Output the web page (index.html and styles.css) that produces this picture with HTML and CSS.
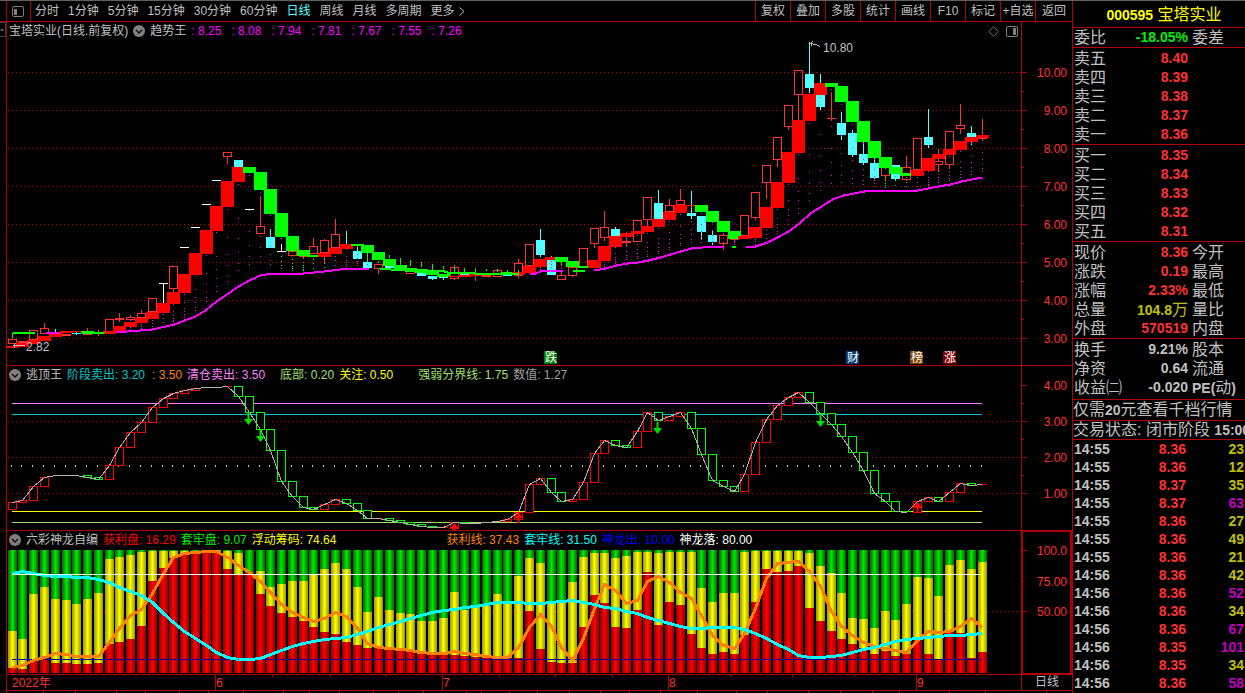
FILE: index.html
```html
<!DOCTYPE html>
<html lang="zh-CN">
<head>
<meta charset="utf-8">
<title>宝塔实业 000595 日线</title>
<link rel="stylesheet" href="styles.css">
</head>
<body>
<div class="app">
  <main class="workspace">
    <nav class="toolbar">
      <button class="layout-toggle" aria-label="切换布局">
        <svg width="12" height="11" viewBox="0 0 12 11"><rect x=".5" y=".5" width="11" height="10" rx="1.5" fill="none" stroke="#808080"/><rect x="2" y="3" width="3" height="6" fill="#808080"/></svg>
      </button>
      <div class="periods">
        <button>分时</button><button>1分钟</button><button>5分钟</button><button>15分钟</button><button>30分钟</button><button>60分钟</button><button class="active">日线</button><button>周线</button><button>月线</button><button>多周期</button>
        <button>更多<svg class="chevron" width="6" height="9" viewBox="0 0 6 9"><path d="M.5 .5L5 4.500L.5 8.500" fill="none" stroke="#c0c0c0"/></svg></button>
      </div>
      <div class="actions">
        <button>复权</button><button>叠加</button><button>多股</button><button>统计</button><button>画线</button><button>F10</button><button>标记</button><button>+自选</button><button>返回</button>
      </div>
    </nav>

    <div class="body">
      <div class="rail">
        <svg width="6" height="16" viewBox="0 0 6 16"><path d="M0 .5H5.500V14.500H0" fill="none" stroke="#404040"/><path d="M0 9L2 6L4 9z" fill="#606060"/></svg>
      </div>
      <div class="panels">
        <section class="panel panel-price">
          <div class="plot">
            <div class="legend">
              <span>宝塔实业(日线.前复权)</span>
              <svg class="drop" width="12" height="12" viewBox="0 0 12 12"><circle cx="6" cy="6" r="6" fill="#808080"/><path d="M3 5L6 8L9 5" fill="none" stroke="#101010" stroke-width="1.500"/></svg>
              <span>趋势王</span>
              <div class="trend"><span>: 8.25</span><span>: 8.08</span><span>: 7.94</span><span>: 7.81</span><span>: 7.67</span><span>: 7.55</span><span>: 7.26</span></div>
              <div class="tools">
                <svg width="11" height="11" viewBox="0 0 11 11"><path d="M5.500 .7L10.300 5.500L5.500 10.300L.7 5.500z" fill="none" stroke="#707070"/></svg>
                <svg width="12" height="11" viewBox="0 0 12 11"><rect x=".5" y=".5" width="11" height="10" rx="1.500" fill="none" stroke="#808080"/><rect x="7" y="2" width="3" height="7" fill="#808080"/></svg>
              </div>
            </div>
            <svg class="chart" id="price"></svg>
          </div>
          <svg class="axis" id="price-axis"></svg>
        </section>

        <section class="panel panel-escape">
          <div class="plot">
            <div class="legend">
              <svg class="drop" width="12" height="12" viewBox="0 0 12 12"><circle cx="6" cy="6" r="6" fill="#808080"/><path d="M3 5L6 8L9 5" fill="none" stroke="#101010" stroke-width="1.500"/></svg>
              <span>逃顶王</span>
              <span class="teal">阶段卖出: 3.20</span>
              <span class="orange offset-s">: 3.50</span>
              <span class="pink">清仓卖出: 3.50</span>
              <span class="lime offset-m">底部: 0.20</span>
              <span class="yellow">关注: 0.50</span>
              <span class="lime offset-l">强弱分界线: 1.75</span>
              <span class="gray">数值: 1.27</span>
            </div>
            <svg class="chart" id="escape"></svg>
          </div>
          <svg class="axis" id="escape-axis"></svg>
        </section>

        <section class="panel panel-dragon">
          <div class="plot">
            <div class="legend">
              <svg class="drop" width="12" height="12" viewBox="0 0 12 12"><circle cx="6" cy="6" r="6" fill="#808080"/><path d="M3 5L6 8L9 5" fill="none" stroke="#101010" stroke-width="1.500"/></svg>
              <span>六彩神龙自编</span>
              <span class="red">获利盘: 16.29</span>
              <span class="green">套牢盘: 9.07</span>
              <span class="yellow">浮动筹码: 74.64</span>
              <span class="orange offset-xl">获利线: 37.43</span>
              <span class="cyan">套牢线: 31.50</span>
              <span class="blue">神龙出: 10.00</span>
              <span class="white">神龙落: 80.00</span>
            </div>
            <svg class="chart" id="dragon"></svg>
          </div>
          <svg class="axis boxed" id="dragon-axis"></svg>
        </section>

        <div class="timeline">
          <svg class="dates" id="dates"></svg>
          <span class="period">日线</span>
        </div>
        <svg class="footer" id="footer"></svg>
      </div>
    </div>
  </main>

  <aside class="quote">
    <h1><b>000595</b> 宝塔实业</h1>
    <table class="block single"><tbody>
      <tr><th>委比</th><td class="green">-18.05%</td><th>委差</th></tr>
    </tbody></table>
    <table class="block"><tbody>
      <tr><th>卖五</th><td>8.40</td><th></th></tr>
      <tr><th>卖四</th><td>8.39</td><th></th></tr>
      <tr><th>卖三</th><td>8.38</td><th></th></tr>
      <tr><th>卖二</th><td>8.37</td><th></th></tr>
      <tr><th>卖一</th><td>8.36</td><th></th></tr>
    </tbody></table>
    <table class="block"><tbody>
      <tr><th>买一</th><td>8.35</td><th></th></tr>
      <tr><th>买二</th><td>8.34</td><th></th></tr>
      <tr><th>买三</th><td>8.33</td><th></th></tr>
      <tr><th>买四</th><td>8.32</td><th></th></tr>
      <tr><th>买五</th><td>8.31</td><th></th></tr>
    </tbody></table>
    <table class="block"><tbody>
      <tr><th>现价</th><td>8.36</td><th>今开</th></tr>
      <tr><th>涨跌</th><td>0.19</td><th>最高</th></tr>
      <tr><th>涨幅</th><td>2.33%</td><th>最低</th></tr>
      <tr><th>总量</th><td class="olive">104.8<span class="unit">万</span></td><th>量比</th></tr>
      <tr><th>外盘</th><td>570519</td><th>内盘</th></tr>
    </tbody></table>
    <table class="block tall"><tbody>
      <tr><th>换手</th><td class="plain">9.21%</td><th>股本</th></tr>
      <tr><th>净资</th><td class="plain">0.64</td><th>流通</th></tr>
      <tr><th>收益㈡</th><td class="plain">-0.020</td><th><b>PE(</b>动<b>)</b></th></tr>
    </tbody></table>
    <p class="promo">仅需<b>20</b>元查看千档行情</p>
    <p class="status">交易状态: 闭市阶段 <b>15:00</b></p>
    <table class="ticks"><tbody>
      <tr><th>14:55</th><td>8.36</td><td class="olive">23</td></tr>
      <tr><th>14:55</th><td>8.36</td><td class="olive">12</td></tr>
      <tr><th>14:55</th><td>8.37</td><td class="olive">35</td></tr>
      <tr><th>14:55</th><td>8.37</td><td class="purple">63</td></tr>
      <tr><th>14:55</th><td>8.36</td><td class="olive">27</td></tr>
      <tr><th>14:55</th><td>8.36</td><td class="olive">49</td></tr>
      <tr><th>14:55</th><td>8.36</td><td class="olive">21</td></tr>
      <tr><th>14:56</th><td>8.36</td><td class="olive">42</td></tr>
      <tr><th>14:56</th><td>8.36</td><td class="purple">52</td></tr>
      <tr><th>14:56</th><td>8.36</td><td class="olive">34</td></tr>
      <tr><th>14:56</th><td>8.36</td><td class="purple">67</td></tr>
      <tr><th>14:56</th><td>8.35</td><td class="purple">101</td></tr>
      <tr><th>14:56</th><td>8.35</td><td class="olive">34</td></tr>
      <tr><th>14:56</th><td>8.36</td><td class="purple">58</td></tr>
    </tbody></table>
  </aside>
</div>
<script src="charts.js"></script>
</body>
</html>
```

FILE: styles.css
```css
* { box-sizing: border-box; }
body {
  margin: 0;
  background: #000;
  color: #c0c0c0;
  font: 12px/16px "Liberation Sans", "Noto Sans CJK SC", sans-serif;
}
button {
  padding: 0;
  border: 0;
  background: none;
  color: inherit;
  font: inherit;
  white-space: nowrap;
  cursor: pointer;
}
svg { display: block; flex: none; }

.app {
  display: grid;
  grid-template-columns: minmax(0, 1fr) 173px;
  height: 100vh;
  min-height: 600px;
  border-top: 1px solid #606060;
  overflow: hidden;
}
.workspace { display: flex; flex-direction: column; min-width: 0; min-height: 0; }

.toolbar {
  display: flex;
  flex: none;
  height: 21px;
  border-bottom: 1px solid #b00000;
}
.layout-toggle {
  width: 25px;
  margin-left: 6px;
  padding-left: 5px;
  border-left: 1px solid #b00000;
  border-right: 1px solid #b00000;
}
.periods { display: flex; gap: 9px; padding-left: 4px; }
.periods button { display: flex; align-items: center; gap: 4px; }
.periods .active { color: #54ffff; }
.actions { display: flex; margin-left: auto; }
.actions button { width: 35px; border-left: 1px solid #b00000; }
.actions button:last-child { width: 37px; }

.body { display: flex; flex: 1; min-height: 0; }
.rail { flex: none; width: 7px; border-right: 1px solid #b00000; }
.panels { display: flex; flex: 1; flex-direction: column; min-width: 0; }
.panel {
  display: grid;
  grid-template-columns: minmax(0, 1fr) 51px;
  grid-template-rows: minmax(0, 1fr);
  min-height: 0;
  border-bottom: 1px solid #b00000;
}
.panel-price { flex: 343 1 0; }
.panel-escape { flex: 164 1 0; }
.panel-dragon { flex: 143 1 0; }
.plot { display: flex; flex-direction: column; min-width: 0; min-height: 0; }
.legend {
  display: flex;
  flex: none;
  align-items: center;
  gap: 5px;
  height: 18px;
  padding-left: 2px;
  white-space: nowrap;
}
.trend { display: flex; gap: 10px; color: #f0f; }
.tools { display: flex; gap: 7px; margin-left: auto; padding-right: 3px; }
.offset-s { margin-left: 2px; }
.offset-m { margin-left: 10px; }
.offset-l { margin-left: 20px; }
.offset-xl { margin-left: 105px; }
.chart { flex: 1 1 0; width: 100%; min-height: 0; }
.axis { width: 100%; height: 100%; border-left: 1px solid #b00000; }
.boxed { border: 2px solid #b00000; border-top-width: 1px; border-bottom-width: 1px; }

.timeline {
  display: grid;
  grid-template-columns: minmax(0, 1fr) 51px;
  flex: none;
  height: 16px;
  border-bottom: 1px solid #b00000;
}
.dates { width: 100%; height: 15px; }
.period { border-left: 1px solid #b00000; text-align: center; line-height: 15px; }
.footer { width: 100%; height: 2px; }

.quote {
  min-width: 0;
  border-left: 1px solid #b00000;
  overflow: hidden;
  font-size: 16px;
  white-space: nowrap;
}
.quote h1 {
  height: 27px;
  margin: 0;
  padding-left: 10px;
  border-bottom: 1px solid #b00000;
  color: #ff0;
  font-size: 16px;
  font-weight: 400;
  line-height: 28px;
  text-align: center;
}
.quote b { font-size: 14px; }
table { width: 100%; border-collapse: collapse; table-layout: fixed; }
th, td { padding: 0; line-height: 19px; }
th { font-weight: 400; text-align: left; }
td { color: #ff3232; font-size: 14px; font-weight: 700; text-align: right; }
.block { display: block; height: 97px; padding-top: 1px; border-bottom: 1px solid #b00000; overflow: hidden; }
.block tbody { display: block; }
.block tr { display: grid; grid-template-columns: 50px 65px minmax(0, 1fr); height: 19px; }
.block th:first-child { padding-left: 1px; }
.block th:last-child { padding-left: 4px; }
.single { height: 20px; padding-top: 0; }
.tall { height: 61px; }
.unit { font-size: 16px; font-weight: 400; }
.promo, .status { margin: 0; border-bottom: 1px solid #b00000; }
.promo { height: 21px; line-height: 20px; }
.status { height: 19px; line-height: 18px; }
.ticks { width: 100%; }
.ticks th { width: 44px; padding-left: 1px; font-size: 14px; font-weight: 700; }
.ticks td:nth-child(2) { width: 69px; }
.ticks td:last-child { padding-right: 1px; }
.ticks th, .ticks td { height: 18px; line-height: 18px; }

.teal { color: #00c8c8; }
.orange { color: #ff8000; }
.pink { color: #ff80ff; }
.lime { color: #a0e070; }
.yellow { color: #ff0; }
.gray { color: #a0a0a0; }
.red { color: #f00; }
.green, td.green { color: #00f000; }
.cyan { color: #0ff; }
.blue { color: #00f; }
.white { color: #fff; }
td.olive { color: #c0c000; }
td.purple { color: #c000c0; }
td.plain { color: #c0c0c0; }
```

FILE: charts.js
```js
const NS = 'http://www.w3.org/2000/svg';
const LINE = '#b00000', UP = '#ff3232', DOWN = '#54ffff', COUNT = 91;
const barX = i => Math.floor(12.2 + 10.776 * i);

// Drawing surface that maps design coordinates onto the element's real size.
function surface(id, x0, y0, w0, h0) {
  const svg = document.getElementById(id);
  svg.replaceChildren();
  const kx = (svg.clientWidth || w0) / w0, ky = (svg.clientHeight || h0) / h0;
  const X = x => Math.round((x - x0) * kx), Y = y => Math.round((y - y0) * ky);
  const add = (tag, attrs, text) => {
    const el = document.createElementNS(NS, tag);
    for (const k in attrs) el.setAttribute(k, attrs[k]);
    if (text !== undefined) el.textContent = text;
    svg.appendChild(el);
    return el;
  };
  const s = {
    add, X, Y,
    fill(x, y, w, h, c) {
      add('rect', { x: X(x), y: Y(y), width: Math.max(1, X(x + w) - X(x)), height: Math.max(1, Y(y + h) - Y(y)), fill: c, 'shape-rendering': 'crispEdges' });
    },
    box(x, y, w, h, c) {
      add('rect', { x: X(x) + .5, y: Y(y) + .5, width: Math.max(1, X(x + w) - X(x) - 1), height: Math.max(1, Y(y + h) - Y(y) - 1), fill: 'none', stroke: c, 'shape-rendering': 'crispEdges' });
    },
    path(points, c, width) {
      add('polyline', { points: points.map(p => X(p[0]) + .5 + ',' + (Y(p[1]) + .5)).join(' '), fill: 'none', stroke: c, 'stroke-width': width, 'shape-rendering': 'crispEdges' });
    },
    dots(y, x1, x2, c, dash) {
      add('line', { x1: X(x1), x2: X(x2), y1: Y(y) + .5, y2: Y(y) + .5, stroke: c, 'stroke-dasharray': dash, 'shape-rendering': 'crispEdges' });
    },
    text(x, y, t, c, anchor) {
      add('text', { x: X(x), y: Y(y), fill: c, 'font-size': 12, 'text-anchor': anchor || 'start' }, t);
    }
  };
  return s;
}

// index: [kind, high, top, bottom, low]; r = hollow, c = filled, w = flat
const candles = [
  ['r',339,339,344,344],['r',341,341,343,343],['r',330,330,340,340],['r',323,328,334,334],['c',329,332,333,333],
  ['r',334,334,336,336],['c',332,333,334,335],['r',328,333,335,335],['r',330,333,334,336],['r',319,319,332,332],
  ['r',313,318,320,322],['r',315,317,320,321],['r',310,313,318,318],['r',298,298,312,312],['w',283,283,284,303],
  ['r',266,266,289,292],['w',247,247,248,248],['w',227,227,228,228],['w',204,204,205,205],['w',180,180,181,181],
  ['r',152,152,157,164],['c',160,160,167,167],['w',209,209,210,210],['r',196,226,234,234],['c',229,237,248,248],
  ['w',244,251,252,252],['r',251,251,256,256],['r',256,256,257,259],['r',238,246,254,254],['r',239,240,253,264],
  ['r',219,234,248,248],['c',231,244,248,248],['c',246,251,259,259],['c',262,262,268,268],['r',264,264,269,274],
  ['c',264,264,268,268],['c',268,268,270,271],['r',271,271,274,274],['c',273,273,276,276],['c',276,276,279,280],
  ['c',277,277,278,280],['r',265,267,279,280],['c',268,273,276,276],['r',268,274,275,281],['r',275,275,277,277],
  ['r',269,270,277,277],['c',270,275,276,276],['r',259,263,276,278],['r',244,244,266,266],['c',229,240,255,257],
  ['c',256,260,275,275],['r',272,275,280,280],['r',267,267,276,277],['r',248,248,267,267],['r',228,228,244,248],
  ['r',211,227,238,241],['c',227,229,236,236],['r',232,241,243,246],['r',220,220,242,242],['r',197,197,220,226],
  ['c',190,203,219,219],['r',199,205,212,212],['r',189,200,205,205],['c',191,213,216,219],['c',216,216,232,239],
  ['c',230,235,242,245],['r',233,235,244,250],['r',239,239,240,242],['r',215,215,236,236],['r',192,192,218,220],
  ['r',165,165,183,199],['r',137,137,160,167],['r',105,105,127,130],['r',70,70,95,120],['c',42,74,88,93],
  ['c',74,95,107,110],['r',92,118,119,121],['c',112,123,135,140],['c',130,133,155,157],['c',142,154,163,165],
  ['c',158,163,178,179],['r',167,167,176,181],['c',165,165,179,180],['r',156,167,180,181],['r',138,138,170,170],
  ['c',109,137,145,148],['r',149,161,165,172],['r',131,131,165,169],['r',104,125,129,134],['c',126,133,137,145],
  ['r',119,138,139,141]
];
// trend steps: [top, bottom, rising]
const steps = [
  [346,348,1],[343,347,1],[340,344,1],[336,341,1],[333,337,1],[331,333,1],[331,332,1],[331,333,0],[332,334,0],[331,334,1],
  [326,332,1],[322,327,1],[318,323,1],[312,319,1],[303,313,1],[292,304,1],[274,293,1],[253,275,1],[230,254,1],[206,231,1],
  [181,207,1],[167,182,1],[167,173,0],[172,190,0],[189,214,0],[213,237,0],[236,251,0],[250,256,0],[255,257,0],[253,257,1],
  [248,254,1],[244,249,1],[244,246,0],[245,253,0],[252,260,0],[259,266,0],[265,270,0],[268,271,0],[269,273,0],[270,275,0],
  [274,277,0],[276,277,1],[275,277,1],[274,276,1],[274,275,1],[273,275,1],[272,275,0],[272,275,1],[266,273,1],[259,267,1],
  [257,260,1],[257,262,0],[261,267,0],[266,268,0],[260,268,1],[246,261,1],[236,247,1],[233,237,1],[231,234,1],[226,232,1],
  [219,227,1],[212,220,1],[205,213,1],[205,206,1],[205,212,0],[211,222,0],[221,232,0],[231,239,0],[236,239,1],[227,238,1],
  [207,228,1],[182,208,1],[152,183,1],[120,153,1],[94,121,1],[83,95,1],[83,87,0],[86,102,0],[101,122,0],[121,142,0],
  [141,158,0],[157,168,0],[167,174,0],[173,176,0],[170,176,1],[158,171,1],[154,159,1],[149,155,1],[141,150,1],[137,142,1],
  [135,138,1]
];
const baseLine = [
  ['#0f0',[12,332],[34,332]], ['#f0f',[45,332],[59,332]], ['#0f0',[81,332],[104,333]],
  ['#f0f',[116,332],[127,331],[152,329],[174,324],[184,320],[195,316],[205,310],[216,301],[228,293],[238,286],[249,280],[260,275],[271,273],[303,273],[324,271],[340,269],[357,268],[368,268]],
  ['#0f0',[379,268],[390,269],[405,270],[433,270],[444,271],[447,272],[473,272],[475,273],[518,273]],
  ['#f0f',[529,273],[535,273],[540,271],[550,270],[562,270]], ['#0f0',[572,270],[584,270]],
  ['#f0f',[594,270],[605,268],[616,265],[627,263],[638,262],[648,260],[660,257],[680,251],[691,248],[702,247],[713,246],[723,246]],
  ['#0f0',[731,246],[735,246]],
  ['#f0f',[745,246],[755,246],[767,242],[777,237],[788,231],[799,223],[810,213],[821,206],[832,199],[843,195],[864,191],[885,190],[917,190],[938,186],[950,184],[961,181],[982,177]]
];

function drawPrice() {
  const s = surface('price', 7, 40, 1014, 325);
  for (let k = 0; k < 8; k++) s.dots(72 + 38 * k, 8, 1021, '#c00000', '1 3');
  candles.forEach(([kind, hi, top, bot, lo], i) => {
    const x = barX(i), c = kind === 'r' ? UP : kind === 'c' ? DOWN : '#fff';
    if (hi < top) s.fill(x, hi, 1, top - hi, c);
    if (lo > bot) s.fill(x, bot, 1, lo - bot, c);
    if (kind === 'r' && bot - top > 1) s.box(x - 4, top, 9, bot - top, c);
    else s.fill(x - 4, top, 9, bot - top, c);
  });
  const base = x => {
    for (const seg of baseLine) for (let k = 1; k < seg.length - 1; k++) {
      const [a, b] = [seg[k], seg[k + 1]];
      if (x >= a[0] && x <= b[0]) return a[1] + (b[1] - a[1]) * (x - a[0]) / (b[0] - a[0]);
    }
    return null;
  };
  steps.forEach(([top, bot, up], i) => {
    const x = barX(i);
    s.fill(x - 6, top, 13, bot - top, up ? '#f00' : '#0f0');
    const b = base(x);
    if (b !== null && b - bot > 3) {
      const green = (i > 24 && i < 30) || (i > 80 && i < 84);
      const parts = b - bot > 16 ? [.98, .65, .46, .33, .22, .15] : [.9, .6, .3];
      for (const f of parts) s.fill(x, Math.round(b - (b - bot) * f), 1, 1, green ? '#0f0' : '#f0f');
    }
  });
  baseLine.forEach(([c, ...pts]) => s.path(pts, c, 2));
  [[33,253,262],[34,261,263],[35,255,258],[36,258,266],[37,260,266],[38,262,267],[39,264,270],[40,266,269],[41,267,274],[42,268,273],[43,269,272],[44,269,271],[45,269,272],[46,270,273],[47,270,273],[51,262,265],[0,333,338]].forEach(([i, a, b]) => s.fill(barX(i), a, 1, b - a, '#0f0'));
  s.path([[820,46],[815,44],[810,43]], '#c0c0c0', 1);
  s.path([[812,41],[810,43],[812,46]], '#c0c0c0', 1);
  s.text(823, 52, '10.80', '#c0c0c0');
  s.path([[24,345],[12,345]], '#c0c0c0', 1);
  s.path([[15,343],[13,345],[15,348]], '#c0c0c0', 1);
  s.text(26, 351, '2.82', '#c0c0c0');
  [[544,'跌','#008000'],[846,'财','#003c78'],[910,'榜','#804000'],[943,'涨','#800000']].forEach(([x, t, c]) => {
    const X = s.X(x), Y = s.Y(351);
    s.add('path', { d: `M${X} ${Y}h11l2 2v11h-13z`, fill: c });
    s.text(x + .6, 362, t, '#fff');
  });
}

// start level followed by the level at each bar
const escape = [509,
  502,500,486,477,475,475,475,477,479,465,447,432,422,407,398,393,390,388,387,387,386,396,412,429,450,481,496,507,509,504,
  499,503,510,518,518,520,522,524,526,527,527,522,523,523,522,521,519,512,484,478,492,501,499,482,453,440,445,447,431,412,
  420,416,412,428,454,480,486,491,474,442,419,405,397,392,402,413,424,436,452,470,493,501,511,512,501,497,501,492,483,485,484];

function drawEscape() {
  const s = surface('escape', 7, 384, 1014, 146);
  [421, 457, 493].forEach(y => s.dots(y, 8, 1018, '#c00000', '1 3'));
  [[403,'#ff80ff'],[414,'#00c8c8'],[511,'#ffff00'],[522,'#a0e070']].forEach(([y, c]) => s.fill(12, y, 970, 1, c));
  for (let i = 0; i < COUNT; i++) {
    const x = barX(i), a = escape[i], b = escape[i + 1], top = Math.min(a, b), h = Math.abs(a - b) + 1;
    s.fill(x - 1, 465, 1, 2, '#a0e070');
    if (i > 3 && i < 7) continue;
    const c = b > a ? '#0f0' : '#f00';
    if (h > 2) {
      s.fill(x - 3, top + 1, 7, h - 2, '#000');
      s.box(x - 4, top, 9, h, c);
    } else s.fill(x - 4, top, 9, 1, c);
  }
  s.path(escape.slice(1).map((v, i) => [barX(i), v]), '#b0b0b0', 1);
  [[248,412,425],[260,429,442],[657,422,434],[820,414,427]].forEach(([x, a, b]) => {
    const X = s.X(x) + .5, A = s.Y(a), B = s.Y(b);
    s.add('path', { d: `M${X - 1} ${A}h2V${B - 6}h3.500L${X} ${B}L${X - 4.5} ${B - 6}h3.500z`, fill: '#00e000' });
  });
  [[454,523,530],[518,512,523],[917,502,513]].forEach(([x, a, b]) => {
    const X = s.X(x) + .5, A = s.Y(a), B = s.Y(b);
    s.add('path', { d: `M${X} ${A}L${X + 5} ${A + 6}H${X + 1}V${B}H${X - 1}V${A + 6}H${X - 5}z`, fill: '#f00' });
  });
}

// third-pixel levels below the panel top
const floating = [303,327,192,171,207,210,222,207,189,87,81,75,66,63,63,63,63,62,61,61,63,69,130,123,171,162,153,153,132,117,
  99,117,171,246,201,240,249,252,273,273,264,186,240,228,228,192,213,138,84,99,213,213,156,81,69,69,84,78,66,66,
  69,66,66,66,174,216,189,189,66,63,63,63,63,63,69,108,129,189,264,267,294,243,270,222,141,144,198,105,90,117,96];
const profit = [414,417,388,384,399,399,402,402,399,342,336,327,288,153,114,85,72,68,66,66,117,132,130,192,228,249,261,273,291,306,
  312,336,345,354,350,355,357,363,372,375,375,375,378,381,384,384,384,384,243,357,396,399,399,291,195,219,291,294,240,126,
  285,216,225,312,354,372,366,372,315,216,117,126,123,108,234,273,303,327,342,354,372,363,378,372,330,372,387,307,309,384,366];
const profitLine = [410,405,390,382,370,373,378,379,378,335,295,256,238,190,130,80,70,65,64,64,82,105,127,152,185,222,247,262,274,265,
  247,258,295,340,350,355,358,361,365,368,370,364,368,371,379,380,380,352,290,253,288,352,390,325,235,163,180,219,210,153,
  139,155,186,205,255,316,346,355,310,235,143,100,97,94,124,167,243,288,316,335,348,355,361,365,330,304,307,303,287,264,290];
const trappedLine = [130,124,129,136,138,139,140,142,146,157,171,182,196,216,248,275,303,325,345,366,382,387,388,383,371,359,348,340,334,328,
  325,320,311,302,292,283,274,265,256,247,241,236,232,227,221,217,215,215,219,220,217,214,211,216,223,231,235,242,250,262,
  271,280,289,295,295,292,292,292,298,308,323,343,358,374,380,380,379,374,367,358,350,341,332,326,325,322,317,316,316,313,310];

function drawDragon() {
  const s = surface('dragon', 7, 549, 1014, 125);
  const defs = s.add('defs', {});
  [['gG','#006800','#00e800'],['gY','#989800','#ffff00'],['gR','#900000','#ff0000']].forEach(([id, edge, mid]) => {
    defs.innerHTML += `<linearGradient id="${id}"><stop offset="0" stop-color="${edge}"/><stop offset=".5" stop-color="${mid}"/><stop offset="1" stop-color="${edge}"/></linearGradient>`;
  });
  const level = z => Math.round(530 + z / 3);
  s.dots(611, 8, 1018, '#c00000', '1 3');
  for (let i = 0; i < COUNT; i++) {
    const x = barX(i) - 4, g = level(floating[i]), r = level(profit[i]);
    s.fill(x, 550, 9, g - 550, 'url(#gG)');
    if (r > g) s.fill(x, g, 9, r - g, 'url(#gY)');
    s.fill(x, r, 9, 673 - r, 'url(#gR)');
  }
  s.fill(12, 659, 970, 1, '#0000a0');
  s.path(profitLine.map((v, i) => [barX(i), 530 + v / 3]), '#ff8000', 3);
  s.path(trappedLine.map((v, i) => [barX(i), 530 + v / 3]), '#0ff', 3);
  s.fill(12, 574, 970, 1, '#fff');
}

function drawAxes() {
  let s = surface('price-axis', 1022, 22, 50, 343);
  for (let k = 0; k < 8; k++) {
    s.fill(1022, 72 + 38 * k, 5, 1, LINE);
    if (k < 7) s.fill(1022, 91 + 38 * k, 2, 1, LINE);
    s.text(1067, 77 + 38 * k, (10 - k) + '.00', UP, 'end');
  }
  s = surface('escape-axis', 1022, 366, 50, 164);
  for (let k = 0; k < 4; k++) {
    s.fill(1022, 385 + 36 * k, 5, 1, LINE);
    if (k < 3) s.fill(1022, 403 + 36 * k, 2, 1, LINE);
    s.text(1067, 390 + 36 * k, (4 - k) + '.00', UP, 'end');
  }
  s = surface('dragon-axis', 1023, 532, 47, 141);
  [[550,'100.0',4],[581,'75.00',1],[611,'50.00',4]].forEach(([y, t, w]) => {
    s.fill(1023, y, w, 1, LINE);
    s.text(1067, y + 5, t, UP, 'end');
  });
}

function drawDates() {
  const s = surface('dates', 7, 675, 1014, 15);
  [272,330,386,499,555,612,730,792,854].forEach(x => s.fill(x, 675, 1, 2, LINE));
  [215,442,668,916].forEach(x => s.fill(x, 675, 1, 15, LINE));
  s.text(12, 687, '2022年', UP);
  [[216,6],[443,7],[669,8],[917,9]].forEach(([x, t]) => s.text(x, 687, t, UP));
  const f = surface('footer', 7, 691, 1065, 2);
  [43,75,116,145,179,208,243,283,309,339,373,398,423,466,481,509,537,569,600,629,660,697,736,767,808,840,872,899,949,985,1046].forEach(x => f.fill(x, 691, 1, 2, LINE));
}

function drawAll() {
  drawPrice();
  drawEscape();
  drawDragon();
  drawAxes();
  drawDates();
}
drawAll();
window.addEventListener('resize', drawAll);
```
